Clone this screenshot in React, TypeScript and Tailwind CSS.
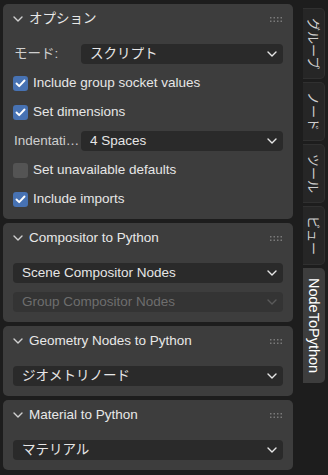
import React from "react";

const Chevron = ({ className }: { className?: string }) => (
  <svg width="10" height="6" viewBox="0 0 10 6" className={className}>
    <polyline points="1,1 5,5 9,1" fill="none" stroke="currentColor" strokeWidth="1.4" strokeLinecap="round" strokeLinejoin="round" />
  </svg>
);

const Grip = () => (
  <svg width="14" height="7" viewBox="0 0 14 7">
    {[0, 1].map((r) =>
      [0, 1, 2, 3].map((c) => (
        <rect key={`${r}-${c}`} x={1 + c * 3.5} y={1 + r * 3.5} width="1.5" height="1.5" fill="#7a7a7a" />
      ))
    )}
  </svg>
);

const Check = ({ on }: { on: boolean }) =>
  on ? (
    <div className="w-[15px] h-[15px] rounded-[3px] bg-[#4772b3] flex items-center justify-center shrink-0">
      <svg width="11" height="9" viewBox="0 0 11 9">
        <polyline points="1.5,4.5 4.2,7.2 9.5,1.5" fill="none" stroke="#ffffff" strokeWidth="1.9" strokeLinecap="round" strokeLinejoin="round" />
      </svg>
    </div>
  ) : (
    <div className="w-[15px] h-[15px] rounded-[3px] bg-[#545454] shrink-0" />
  );

const Dropdown = ({ value, disabled, className = "" }: { value: string; disabled?: boolean; className?: string }) => (
  <div
    className={`h-[20px] shrink-0 rounded-[4px] flex items-center pl-[9px] pr-[6px] ${className} ${
      disabled ? "bg-[#343434] text-[#6e6e6e]" : "bg-[#2a2a2a] text-[#e6e6e6]"
    }`}
  >
    <span className="flex-1 truncate">{value}</span>
    <Chevron className={disabled ? "text-[#5a5a5a]" : "text-[#e6e6e6]"} />
  </div>
);

const CheckRow = ({ on, label }: { on: boolean; label: string }) => (
  <div className="h-[20px] flex items-center gap-[5px] text-[#e6e6e6]">
    <Check on={on} />
    <span>{label}</span>
  </div>
);

const LabelRow = ({ label, value }: { label: string; value: string }) => (
  <div className="h-[20px] flex items-center">
    <span className="w-[68px] pl-[1px] text-[#cfcfcf] truncate">{label}</span>
    <Dropdown value={value} className="flex-1" />
  </div>
);

const Panel = ({ title, children }: { title: string; children: React.ReactNode }) => (
  <div className="bg-[#3d3d3d] rounded-[5px] px-[10px] pb-[10px]">
    <div className="h-[30px] flex items-center">
      <Chevron className="text-[#d0d0d0]" />
      <span className="ml-[6px] flex-1 text-[#e8e8e8] text-[13.5px]">{title}</span>
      <Grip />
    </div>
    <div className="pt-[10px] flex flex-col gap-[9px]">{children}</div>
  </div>
);

const tabs = [
  { label: "グループ", active: false },
  { label: "ノード", active: false },
  { label: "ツール", active: false },
  { label: "ビュー", active: false },
  { label: "NodeToPython", active: true },
];

export default function App() {
  return (
    <div className="w-[328px] h-[475px] bg-[#1d1d1d] flex text-[13.5px] leading-none font-['Liberation_Sans','Noto_Sans_CJK_JP',sans-serif] overflow-hidden">
      <div className="w-[290px] ml-[3px] mt-[4px] flex flex-col gap-[4px]">
        <Panel title="オプション">
          <LabelRow label="モード:" value="スクリプト" />
          <CheckRow on label="Include group socket values" />
          <CheckRow on label="Set dimensions" />
          <LabelRow label="Indentati…" value="4 Spaces" />
          <CheckRow on={false} label="Set unavailable defaults" />
          <CheckRow on label="Include imports" />
        </Panel>
        <Panel title="Compositor to Python">
          <Dropdown value="Scene Compositor Nodes" />
          <Dropdown value="Group Compositor Nodes" disabled />
        </Panel>
        <Panel title="Geometry Nodes to Python">
          <Dropdown value="ジオメトリノード" />
        </Panel>
        <Panel title="Material to Python">
          <Dropdown value="マテリアル" />
        </Panel>
      </div>
      <div className="ml-[10px] w-[22px] pt-[8px] flex flex-col gap-[3px]">
        {tabs.map((t) => (
          <div
            key={t.label}
            className={`rounded-r-[5px] flex items-center justify-center ${
              t.active
                ? "bg-[#3d3d3d] text-[#ffffff] py-[10px] text-[14.5px]"
                : "bg-[#262626] border border-l-0 border-[#303030] text-[#cfcfcf] py-[9px] text-[13px]"
            }`}
          >
            <span className="[writing-mode:vertical-rl] [text-orientation:sideways] whitespace-nowrap">{t.label}</span>
          </div>
        ))}
      </div>
    </div>
  );
}
